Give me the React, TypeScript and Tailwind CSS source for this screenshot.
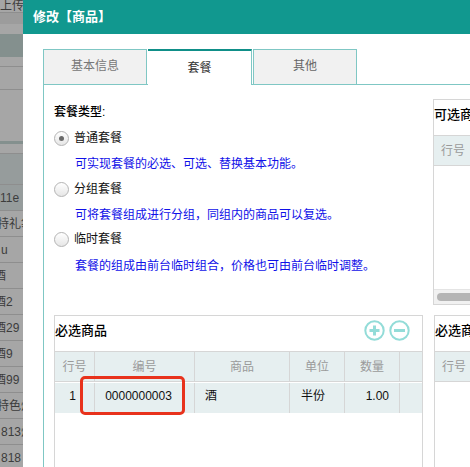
const font = { fontFamily: '"Liberation Sans","Noto Sans CJK SC",sans-serif' };

const line = 'border-b border-[#8e8e8e]';
const stripRows: [string, string, string][] = [
  [`h-[13px] bg-[#a6a6a6] ${line}`, '上传', 'ml-[0px]'],
  ['h-[11px] bg-[#9c9c9c]', '', ''],
  ['h-[10px] bg-[#a6a6a6]', '', ''],
  ['h-[23px] bg-[#84908e]', '', ''],
  [`h-[10px] bg-[#a6a6a6] ${line}`, '', ''],
  [`h-[23px] bg-[#a6a6a6] ${line}`, '', ''],
  ['h-[51px] bg-[#a6a6a6]', '', ''],
  ['h-[3px] bg-[#84908e]', '', ''],
  [`h-[10px] bg-[#a6a6a6] ${line}`, '', ''],
  [`h-[31px] bg-[#969c9c] ${line}`, '', ''],
  [`h-[26px] bg-[#969c9c] ${line}`, '11e', 'ml-[0px]'],
  [`h-[26px] bg-[#a6a6a6] ${line}`, '特礼袋', '-ml-[3px]'],
  [`h-[26px] bg-[#a6a6a6] ${line}`, 'u', 'ml-[1px]'],
  [`h-[26px] bg-[#a6a6a6] ${line}`, '酒', '-ml-[6px]'],
  [`h-[26px] bg-[#a6a6a6] ${line}`, '酒2', '-ml-[6px]'],
  [`h-[26px] bg-[#a6a6a6] ${line}`, '酒29', '-ml-[6px]'],
  [`h-[26px] bg-[#a6a6a6] ${line}`, '酒9', '-ml-[6px]'],
  [`h-[26px] bg-[#a6a6a6] ${line}`, '酒99', '-ml-[6px]'],
  [`h-[26px] bg-[#a6a6a6] ${line}`, '特色炒', '-ml-[3px]'],
  [`h-[26px] bg-[#a6a6a6] ${line}`, '813炒', 'ml-[1px]'],
  [`h-[26px] bg-[#a6a6a6] ${line}`, '818', 'ml-[1px]'],
];

function Strip() {
  return (
    <div className="w-[23px] shrink-0 overflow-hidden flex flex-col">
      {stripRows.map(([cls, text, off], i) => (
        <div key={i} className={`${cls} shrink-0 w-full overflow-hidden flex items-center`}>
          {text && <span className={`${off} text-[12px] leading-none text-[#3c3c3c] whitespace-nowrap`}>{text}</span>}
        </div>
      ))}
    </div>
  );
}

function Radio({ checked }: { checked?: boolean }) {
  return (
    <span className="w-[15px] h-[15px] rounded-full border border-[#b4b4b4] bg-gradient-to-b from-[#ffffff] to-[#e6e6e6] flex items-center justify-center shrink-0">
      {checked && <span className="w-[5px] h-[5px] rounded-full bg-[#6a6a6a]" />}
    </span>
  );
}

function Option({ label, desc, checked, gapClass, descClass }: { label: string; desc: string; checked?: boolean; gapClass: string; descClass: string }) {
  return (
    <div className={gapClass}>
      <div className="flex items-center gap-[5px] h-[16px] text-[12px] text-[#111111]">
        <Radio checked={checked} />
        <span>{label}</span>
      </div>
      <div className={`${descClass} pl-[21px] h-[16px] leading-[16px] text-[12px] text-[#1010e8] whitespace-nowrap`}>{desc}</div>
    </div>
  );
}

function Head({ w, children, last }: { w: string; children?: string; last?: boolean }) {
  return (
    <div className={`${w} shrink-0 h-full flex items-center justify-center text-[12px] text-[#9a9a9a] ${last ? '' : 'border-r border-[#d6d6d6]'}`}>
      {children}
    </div>
  );
}

function Cell({ w, children, align, last }: { w: string; children?: string; align: string; last?: boolean }) {
  return (
    <div className={`${w} shrink-0 h-full flex items-center pb-[4px] ${align} text-[12px] text-[#111111] ${last ? '' : 'border-r border-[#d6d6d6]'}`}>
      {children}
    </div>
  );
}

function RoundIcon({ minus }: { minus?: boolean }) {
  return (
    <svg width="21" height="21" viewBox="0 0 21 21" fill="none" stroke="#93dcd8">
      <circle cx="10.5" cy="10.5" r="9.2" strokeWidth="2" />
      <path d={minus ? 'M5 10.5h11' : 'M5.5 10.5h10M10.5 5.5v10'} strokeWidth="3" />
    </svg>
  );
}

export default function App() {
  return (
    <div className="w-[470px] h-[467px] overflow-hidden flex bg-white" style={font}>
      <Strip />
      <div className="flex-1 min-w-0 flex flex-col overflow-hidden">
        <div className="h-[34px] shrink-0 bg-[#11988f] flex items-center pl-[10px] text-[13px] font-bold text-white">修改【商品】</div>

        <div className="pl-[20px] pt-[15px] flex-1 min-h-0 flex flex-col overflow-hidden">
          <div className="h-[36px] shrink-0 flex border-b border-[#7fc7c4] w-[500px]">
            <div className="w-[104px] h-[36px] shrink-0 bg-[#f1f1f1] border border-[#7fc7c4] flex items-center justify-center pb-[3px] text-[12px] text-[#777777]">基本信息</div>
            <div className="w-[104px] h-[36px] shrink-0 bg-white border-t-2 border-t-[#0f8f88] border-r border-r-[#7fc7c4] flex items-center justify-center text-[12px] text-[#333333] ml-[1px] relative z-10 mr-[1px]">套餐</div>
            <div className="w-[104px] h-[35px] shrink-0 bg-[#f1f1f1] border border-b-0 border-[#7fc7c4] flex items-center justify-center pb-[3px] text-[12px] text-[#666666]">其他</div>
          </div>

          <div className="flex-1 min-h-0 border-l border-[#7fc7c4] pl-[10px] w-[500px] flex flex-col">
            <div className="flex gap-[10px] pt-[14px] shrink-0">
              <div className="w-[369px] shrink-0 h-[206px]">
                <div className="h-[24px] pt-[5px] text-[12px] leading-[16px] text-[#000000] font-medium">套餐类型:</div>
                <div className="mt-[7px]">
                  <Option label="普通套餐" desc="可实现套餐的必选、可选、替换基本功能。" checked gapClass="" descClass="mt-[10px]" />
                  <Option label="分组套餐" desc={'可将套餐组成进行分组\uFF0C同组内的商品可以复选。'} gapClass="mt-[9px]" descClass="mt-[10px]" />
                  <Option label="临时套餐" desc={'套餐的组成由前台临时组合\uFF0C价格也可由前台临时调整。'} gapClass="mt-[8px]" descClass="mt-[11px]" />
                </div>
              </div>
              <div className="w-[300px] shrink-0 h-[206px] border border-[#d6d6d6] flex flex-col">
                <div className="h-[36px] shrink-0 flex items-center pb-[6px] text-[13px] font-medium text-[#000000] whitespace-nowrap border-b border-[#d6d6d6]">可选商品</div>
                <div className="h-[30px] shrink-0 bg-[#e6eff0] border-b border-[#d6d6d6] flex">
                  <Head w="w-[39px]">行号</Head>
                </div>
                <div className="flex-1" />
                <div className="h-[15px] shrink-0 bg-[#f1f1f1] border-t border-[#e4e4e4] flex items-center pl-[3px]">
                  <div className="w-[200px] h-[8px] rounded-full bg-[#b5b5b5]" />
                </div>
              </div>
            </div>

            <div className="flex gap-[11px] mt-[10px] shrink-0">
              <div className="w-[369px] shrink-0 h-[200px] border border-[#d6d6d6] border-b-0 relative">
                <div className="h-[35px] flex items-center justify-between pb-[6px] text-[13px] font-medium text-[#000000] pr-[12px]">
                  <span>必选商品</span>
                  <span className="flex gap-[4px]"><RoundIcon /><RoundIcon minus /></span>
                </div>
                <div className="h-[31px] bg-[#e6eff0] border-y border-[#d6d6d6] flex">
                  <Head w="w-[40px]">行号</Head>
                  <Head w="w-[100px]">编号</Head>
                  <Head w="w-[95px]">商品</Head>
                  <Head w="w-[55px]">单位</Head>
                  <Head w="w-[55px]">数量</Head>
                  <Head w="w-[22px]" last />
                </div>
                <div className="h-[30px] mt-[1px] bg-[#e6eff0] flex">
                  <Cell w="w-[40px]" align="justify-end pr-[18px]">1</Cell>
                  <Cell w="w-[100px]" align="justify-center pr-[12px]">0000000003</Cell>
                  <Cell w="w-[95px]" align="pl-[10px]">酒</Cell>
                  <Cell w="w-[55px]" align="pl-[11px]">半份</Cell>
                  <Cell w="w-[55px]" align="justify-end pr-[10px]">1.00</Cell>
                  <Cell w="w-[22px]" align="" last />
                </div>
                <div className="absolute left-[25px] top-[60px] w-[105px] h-[39px] rounded-[5px] border-[3px] border-[#e8321c]" />
              </div>
              <div className="w-[300px] shrink-0 h-[200px] border border-[#d6d6d6] border-b-0">
                <div className="h-[35px] flex items-center pb-[6px] text-[13px] font-medium text-[#000000] whitespace-nowrap">必选商品</div>
                <div className="h-[31px] bg-[#e6eff0] border-y border-[#d6d6d6] flex">
                  <Head w="w-[39px]">行号</Head>
                </div>
              </div>
            </div>
          </div>
        </div>
      </div>
    </div>
  );
}
